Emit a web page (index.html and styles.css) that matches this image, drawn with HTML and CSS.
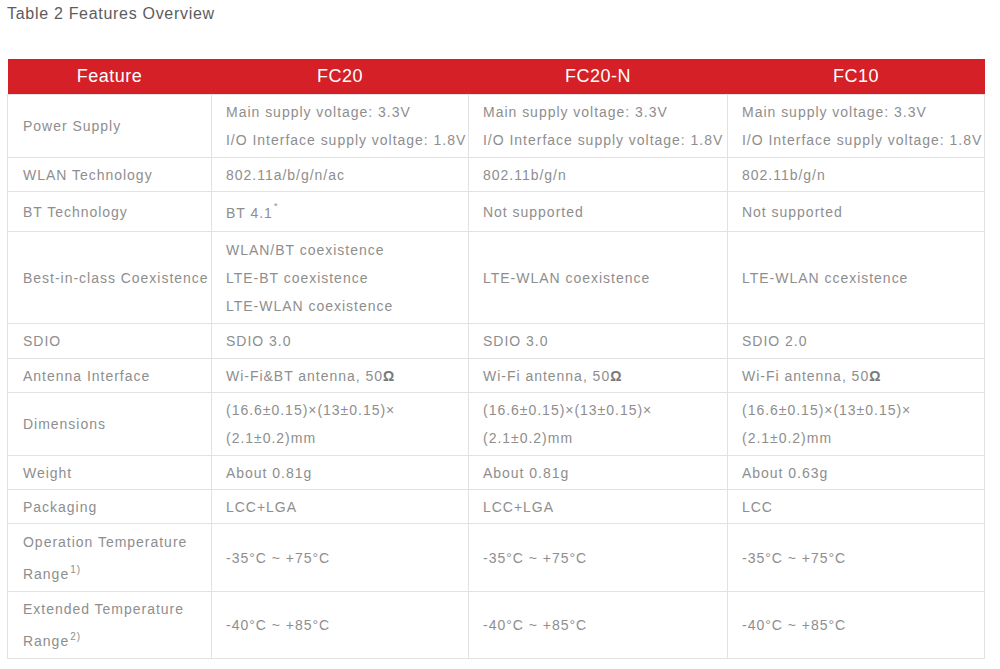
FILE: index.html
```html
<!DOCTYPE html>
<html>
<head>
<meta charset="utf-8">
<link rel="stylesheet" href="styles.css">
</head>
<body>
<div class="page">
  <h1 class="title">Table 2 Features Overview</h1>
  <table class="spec">
    <colgroup>
      <col class="c1"><col class="c2"><col class="c3"><col class="c4">
    </colgroup>
    <thead>
      <tr><th>Feature</th><th>FC20</th><th>FC20-N</th><th>FC10</th></tr>
    </thead>
    <tbody>
      <tr class="h63">
        <td>Power Supply</td>
        <td>Main supply voltage: 3.3V<br>I/O Interface supply voltage: 1.8V</td>
        <td>Main supply voltage: 3.3V<br>I/O Interface supply voltage: 1.8V</td>
        <td>Main supply voltage: 3.3V<br>I/O Interface supply voltage: 1.8V</td>
      </tr>
      <tr class="h34">
        <td>WLAN Technology</td><td>802.11a/b/g/n/ac</td><td>802.11b/g/n</td><td>802.11b/g/n</td>
      </tr>
      <tr class="h40">
        <td>BT Technology</td><td class="down">BT 4.1<sup class="star">*</sup></td><td>Not supported</td><td>Not supported</td>
      </tr>
      <tr class="h92">
        <td>Best-in-class Coexistence</td>
        <td>WLAN/BT coexistence<br>LTE-BT coexistence<br>LTE-WLAN coexistence</td>
        <td>LTE-WLAN coexistence</td>
        <td>LTE-WLAN ccexistence</td>
      </tr>
      <tr class="h35">
        <td>SDIO</td><td>SDIO 3.0</td><td>SDIO 3.0</td><td>SDIO 2.0</td>
      </tr>
      <tr class="h34">
        <td>Antenna Interface</td><td>Wi-Fi&amp;BT antenna, 50<b class="ohm">Ω</b></td><td>Wi-Fi antenna, 50<b class="ohm">Ω</b></td><td>Wi-Fi antenna, 50<b class="ohm">Ω</b></td>
      </tr>
      <tr class="h63">
        <td>Dimensions</td>
        <td>(16.6±0.15)×(13±0.15)×<br>(2.1±0.2)mm</td>
        <td>(16.6±0.15)×(13±0.15)×<br>(2.1±0.2)mm</td>
        <td>(16.6±0.15)×(13±0.15)×<br>(2.1±0.2)mm</td>
      </tr>
      <tr class="h34">
        <td>Weight</td><td>About 0.81g</td><td>About 0.81g</td><td>About 0.63g</td>
      </tr>
      <tr class="h34">
        <td>Packaging</td><td>LCC+LGA</td><td>LCC+LGA</td><td>LCC</td>
      </tr>
      <tr class="h68">
        <td class="two">Operation Temperature<br>Range<sup class="note">1)</sup></td>
        <td>-35°C ~ +75°C</td><td>-35°C ~ +75°C</td><td>-35°C ~ +75°C</td>
      </tr>
      <tr class="h67">
        <td class="two">Extended Temperature<br>Range<sup class="note">2)</sup></td>
        <td>-40°C ~ +85°C</td><td>-40°C ~ +85°C</td><td>-40°C ~ +85°C</td>
      </tr>
    </tbody>
  </table>
</div>
</body>
</html>
```

FILE: styles.css
```css
html, body {
  margin: 0;
  padding: 0;
  background: #ffffff;
}

.page {
  padding: 0 0 0 7px;
  font-family: "Liberation Sans", Arial, sans-serif;
}

.title {
  margin: 0;
  padding-top: 5px;
  height: 54px;
  font-size: 16px;
  font-weight: normal;
  color: #5c5c5c;
  letter-spacing: 0.7px;
  line-height: 18px;
}

.spec {
  border-collapse: collapse;
  table-layout: fixed;
  width: 977px;
  color: #8e8e8e;
  font-size: 14px;
  letter-spacing: 0.98px;
}

.c1 { width: 204px; }
.c2 { width: 257px; }
.c3 { width: 259px; }
.c4 { width: 257px; }

.spec th {
  background: #d52027;
  color: #ffffff;
  font-weight: normal;
  font-size: 18px;
  letter-spacing: 0.5px;
  height: 35px;
  padding: 0;
  text-align: center;
  vertical-align: middle;
}

.spec td {
  border: 1px solid #e2e2e2;
  padding: 0 0 0 14px;
  line-height: 28px;
  vertical-align: middle;
  white-space: nowrap;
  overflow: hidden;
}

.spec td:first-child {
  padding-left: 15px;
}

.h34 { height: 34px; }
.h35 { height: 35px; }
.h40 { height: 40px; }
.h63 { height: 63px; }
.h67 { height: 67px; }
.h68 { height: 68px; }
.h92 { height: 92px; }

.down { padding-top: 3px !important; }
.two { line-height: 32px !important; }

.star {
  font-size: 9px;
  vertical-align: 9px;
  line-height: 0;
  margin-left: 1px;
}

.note {
  font-size: 10px;
  vertical-align: 6px;
  line-height: 0;
  margin-left: 1px;
}

.ohm {
  color: #7a7a7a;
  font-weight: bold;
}
```
